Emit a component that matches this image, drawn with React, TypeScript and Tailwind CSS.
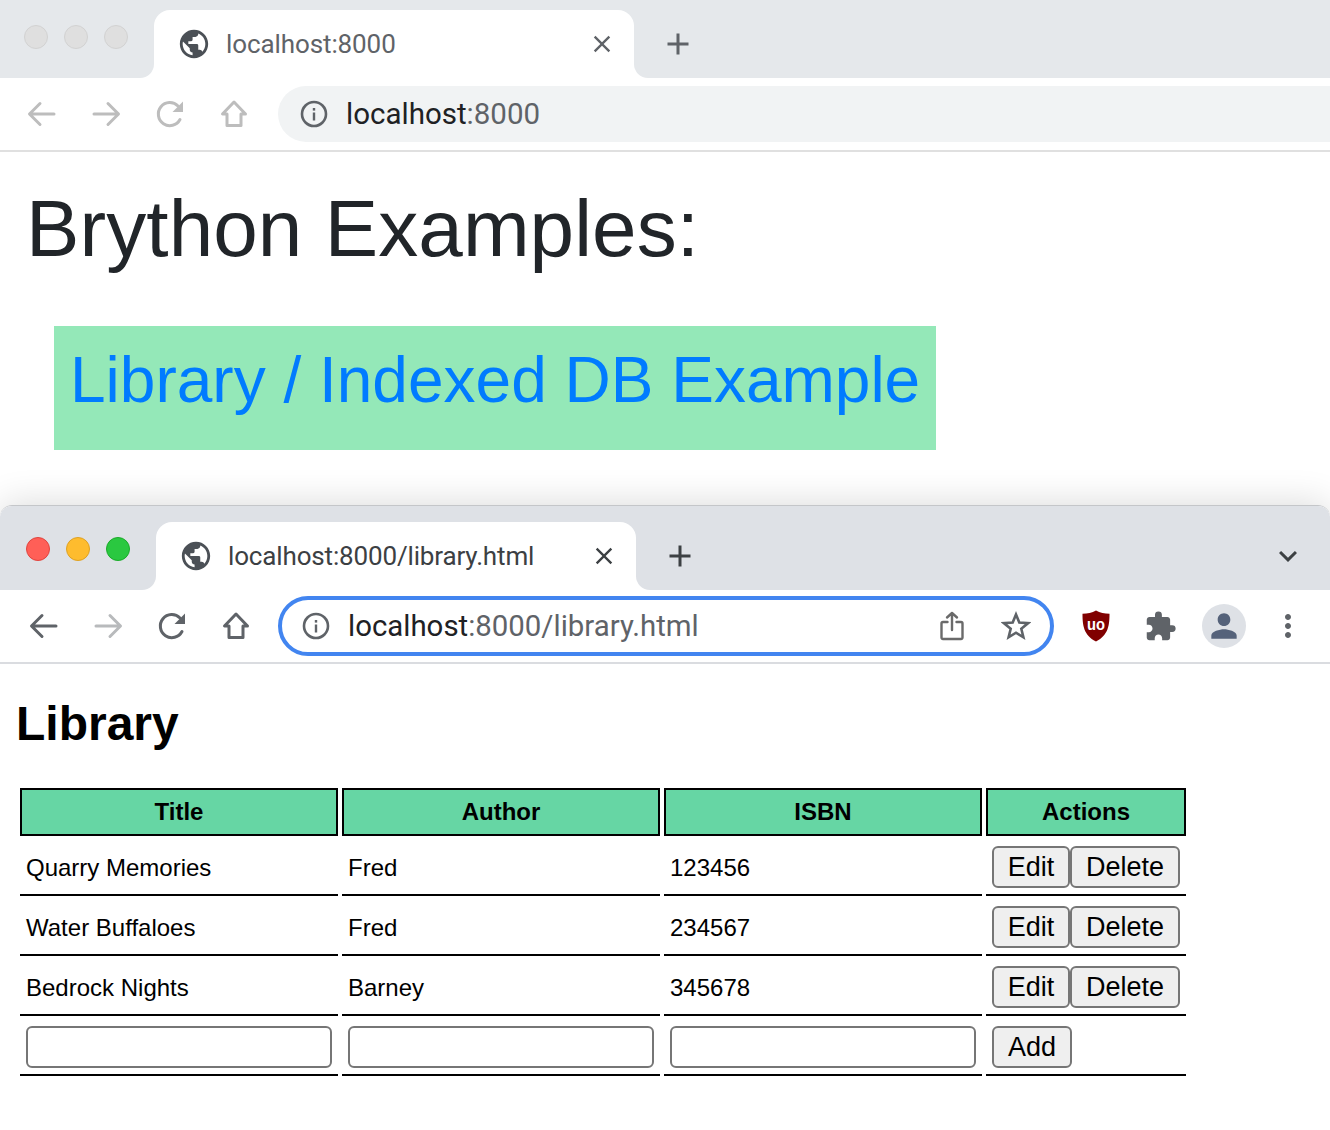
import React from 'react';
import { MdPublic, MdExtension, MdPerson, MdMoreVert, MdClose, MdAdd, MdKeyboardArrowDown } from 'react-icons/md';

const uiFont = "font-['Roboto',sans-serif]";

const BackIcon = ({ color }: { color: string }) => (
  <svg width="32" height="32" viewBox="0 0 32 32" fill="none" stroke={color} strokeWidth="3" strokeLinecap="round" strokeLinejoin="round">
    <path d="M4 16h24M14 5.500 3.500 16 14 26.500" />
  </svg>
);

const ForwardIcon = ({ color }: { color: string }) => (
  <svg width="32" height="32" viewBox="0 0 32 32" fill="none" stroke={color} strokeWidth="3" strokeLinecap="round" strokeLinejoin="round">
    <path d="M28 16H4M18 5.500 28.500 16 18 26.500" />
  </svg>
);

const ReloadIcon = ({ color }: { color: string }) => (
  <svg width="32" height="32" viewBox="0 0 32 32" fill="none">
    <path d="M26 21.500A11.500 11.500 0 1 1 24 8" stroke={color} strokeWidth="3" strokeLinecap="round" />
    <path d="M29 3.500V14H18.500z" fill={color} />
  </svg>
);

const HomeIcon = ({ color }: { color: string }) => (
  <svg width="32" height="32" viewBox="0 0 32 32" fill="none" stroke={color} strokeWidth="3" strokeLinejoin="round">
    <path d="M16 4 4.500 16H9v11.500h14V16h4.500z" />
  </svg>
);

const InfoIcon = () => (
  <svg width="28" height="28" viewBox="0 0 28 28" fill="none">
    <circle cx="14" cy="14" r="12" stroke="#5f6368" strokeWidth="2.600" />
    <rect x="12.800" y="12.500" width="2.400" height="8" fill="#5f6368" />
    <rect x="12.800" y="8" width="2.400" height="2.600" fill="#5f6368" />
  </svg>
);

const ShareIcon = () => (
  <svg width="24" height="30" viewBox="0 0 24 30" fill="none" stroke="#6a6a6a" strokeWidth="2.400" strokeLinecap="round" strokeLinejoin="round">
    <path d="M7.500 11H3a1.500 1.500 0 0 0-1.500 1.500v14A1.500 1.500 0 0 0 3 28h18a1.500 1.500 0 0 0 1.500-1.500v-14A1.500 1.500 0 0 0 21 11h-4.500" />
    <path d="M12 19V2M7 6.500 12 2l5 4.500" />
  </svg>
);

const StarIcon = () => (
  <svg width="30" height="30" viewBox="0 0 30 30" fill="none" stroke="#5f6368" strokeWidth="2.600" strokeLinejoin="miter">
    <path d="m15 3.500 3.300 8.100 8.700.6-6.700 5.600 2.100 8.500-7.400-4.600-7.400 4.600 2.100-8.500L3 12.200l8.700-.6z" />
  </svg>
);

const UBlockIcon = () => (
  <svg width="28" height="32" viewBox="0 0 28 32">
    <path d="M14 0.500c4 2.300 8.500 3.300 13.500 3.300 0 11-1 21.500-13.500 27.700C1.500 25.300 0.500 14.800 0.500 3.800 5.500 3.800 10 2.800 14 0.500z" fill="#800000" />
    <text x="14" y="20" textAnchor="middle" fontSize="17" fontWeight="700" fill="#ffffff" textLength={18} lengthAdjust="spacingAndGlyphs" fontFamily="Liberation Sans, sans-serif">uo</text>
  </svg>
);

const Lights = ({ colors }: { colors: string[] }) => (
  <div className="flex gap-4">
    {colors.map((c, i) => (
      <div key={i} className={`w-6 h-6 rounded-full border ${c}`} />
    ))}
  </div>
);

const rows = [
  ['Quarry Memories', 'Fred', '123456'],
  ['Water Buffaloes', 'Fred', '234567'],
  ['Bedrock Nights', 'Barney', '345678'],
];

const btn = 'h-[42px] bg-[#efefef] border-2 border-[#767676] rounded-[6px] text-[27px] text-black leading-none';
const th = 'h-12 p-0 bg-[#66d6a4] border-2 border-black text-[24px] font-bold text-black text-center';
const td = 'h-14 p-0 pl-1.5 border-b-2 border-black text-[24px] text-black text-left';

export default function App() {
  return (
    <div className="w-[1330px] h-[1130px] overflow-hidden bg-white flex flex-col font-['Liberation_Sans',Arial,sans-serif]">
      {/* Back window */}
      <div className="h-[505px] shrink-0 flex flex-col">
        <div className={`h-[78px] flex bg-white ${uiFont}`}>
          <div className="w-[154px] bg-[#e5e8eb] rounded-br-[14px] flex items-center pl-6 pb-[4px]">
            <Lights colors={['bg-[#dfdfdf] border-[#d2d2d2]', 'bg-[#dfdfdf] border-[#d2d2d2]', 'bg-[#dfdfdf] border-[#d2d2d2]']} />
          </div>
          <div className="w-[480px] bg-[#e5e8eb] pt-2.5">
            <div className="h-[68px] bg-white rounded-t-[16px] flex items-center pl-[23px] pr-[18px]">
              <MdPublic size={34} color="#4b5056" />
              <span className="ml-[15px] text-[26px] tracking-[-0.1px] text-[#5f6368] flex-1">localhost:8000</span>
              <MdClose size={28} color="#5f6368" />
            </div>
          </div>
          <div className="flex-1 bg-[#e5e8eb] rounded-bl-[14px] flex items-center pl-[26px] pt-[10px]">
            <MdAdd size={36} color="#5f6368" />
          </div>
        </div>
        <div className={`h-[74px] flex items-center pl-2.5 border-b-2 border-[#e0e0e0] ${uiFont}`}>
          <div className="w-16 flex justify-center"><BackIcon color="#bdbdbd" /></div>
          <div className="w-16 flex justify-center"><ForwardIcon color="#bdbdbd" /></div>
          <div className="w-16 flex justify-center"><ReloadIcon color="#bdbdbd" /></div>
          <div className="w-16 flex justify-center"><HomeIcon color="#bdbdbd" /></div>
          <div className="ml-3 flex-1 h-14 bg-[#f1f3f4] rounded-l-full flex items-center pl-[22px]">
            <InfoIcon />
            <span className="ml-[18px] pt-px text-[29.5px] text-[#202124]">localhost<span className="text-[#5f6368]">:8000</span></span>
          </div>
        </div>
        <h1 className="mt-[27px] ml-[26px] text-[80px] leading-[100px] tracking-[0.1px] text-[#212529] font-normal">Brython Examples:</h1>
        <div className="mt-[47px] ml-[54px] w-[882px] h-[124px] bg-[#94e8b8] flex items-center pl-4 pb-4">
          <a className="text-[64px] text-[#007bff]">Library / Indexed DB Example</a>
        </div>
      </div>

      {/* Front window */}
      <div className="relative flex-1 bg-white rounded-t-[12px] shadow-[0_-2px_36px_rgba(0,0,0,0.14)]">
        <div className={`h-[85px] flex rounded-t-[12px] border-t border-[#c4c6c9] ${uiFont}`}>
          <div className="w-[156px] bg-[#dee1e6] rounded-tl-[12px] rounded-br-[14px] flex items-center pl-[26px] pt-[2px]">
            <Lights colors={['bg-[#ff5f57] border-[#e0443e]', 'bg-[#febc2e] border-[#dea123]', 'bg-[#2ac840] border-[#1aab29]']} />
          </div>
          <div className="w-[480px] bg-[#dee1e6] pt-4">
            <div className="h-[68px] bg-white rounded-t-[16px] flex items-center pl-[23px] pr-[18px]">
              <MdPublic size={34} color="#4b5056" />
              <span className="ml-[15px] text-[26px] tracking-[-0.15px] text-[#3c4043] flex-1">localhost:8000/library.html</span>
              <MdClose size={28} color="#3c4043" />
            </div>
          </div>
          <div className="flex-1 bg-[#dee1e6] rounded-bl-[14px] rounded-tr-[12px] flex items-center justify-between pl-[26px] pr-[24px] pt-[16px]">
            <MdAdd size={36} color="#3c4043" />
            <MdKeyboardArrowDown size={36} color="#3c4043" />
          </div>
        </div>
        <div className={`h-[74px] flex items-center pl-3 border-b-2 border-[#dadce0] ${uiFont}`}>
          <div className="w-16 flex justify-center"><BackIcon color="#5f6368" /></div>
          <div className="w-16 flex justify-center"><ForwardIcon color="#b8babc" /></div>
          <div className="w-16 flex justify-center"><ReloadIcon color="#5f6368" /></div>
          <div className="w-16 flex justify-center"><HomeIcon color="#5f6368" /></div>
          <div className="ml-2.5 w-[776px] h-[60px] border-4 border-[#4285f0] rounded-full flex items-center pl-[20px] pr-[19px]">
            <InfoIcon />
            <span className="ml-[18px] pt-px flex-1 text-[29.4px] text-[#202124]">localhost<span className="text-[#5f6368]">:8000/library.html</span></span>
            <ShareIcon />
            <div className="ml-[37px]"><StarIcon /></div>
          </div>
          <div className="ml-2.5 w-16 flex justify-center"><UBlockIcon /></div>
          <div className="w-16 flex justify-center"><MdExtension size={33} color="#5f6368" /></div>
          <div className="w-16 flex justify-center">
            <div className="w-11 h-11 rounded-full bg-[#dee1e6] flex items-center justify-center">
              <MdPerson size={38} color="#55627a" />
            </div>
          </div>
          <div className="w-16 flex justify-center"><MdMoreVert size={36} color="#5f6368" /></div>
        </div>

        <h2 className="mt-[30px] ml-4 text-[48px] leading-[60px] font-bold text-black">Library</h2>

        <table className="ml-4 mt-[30px] table-fixed border-separate border-spacing-1 w-[1174px]">
          <colgroup>
            <col className="w-[318px]" />
            <col className="w-[318px]" />
            <col className="w-[318px]" />
            <col className="w-[200px]" />
          </colgroup>
          <thead>
            <tr>
              <th className={th}>Title</th>
              <th className={th}>Author</th>
              <th className={th}>ISBN</th>
              <th className={th}>Actions</th>
            </tr>
          </thead>
          <tbody>
            {rows.map(row => (
              <tr key={row[2]}>
                {row.map(cell => (
                  <td key={cell} className={`${td} pt-0.5`}>{cell}</td>
                ))}
                <td className={td}>
                  <div className="flex">
                    <button className={`${btn} w-[78px]`}>Edit</button>
                    <button className={`${btn} w-[110px]`}>Delete</button>
                  </div>
                </td>
              </tr>
            ))}
            <tr>
              {[0, 1, 2].map(i => (
                <td key={i} className={td}>
                  <input className="block w-[306px] h-[42px] bg-white border-2 border-[#767676] rounded-[6px]" />
                </td>
              ))}
              <td className={td}>
                <button className={`${btn} block w-20`}>Add</button>
              </td>
            </tr>
          </tbody>
        </table>
      </div>
    </div>
  );
}
